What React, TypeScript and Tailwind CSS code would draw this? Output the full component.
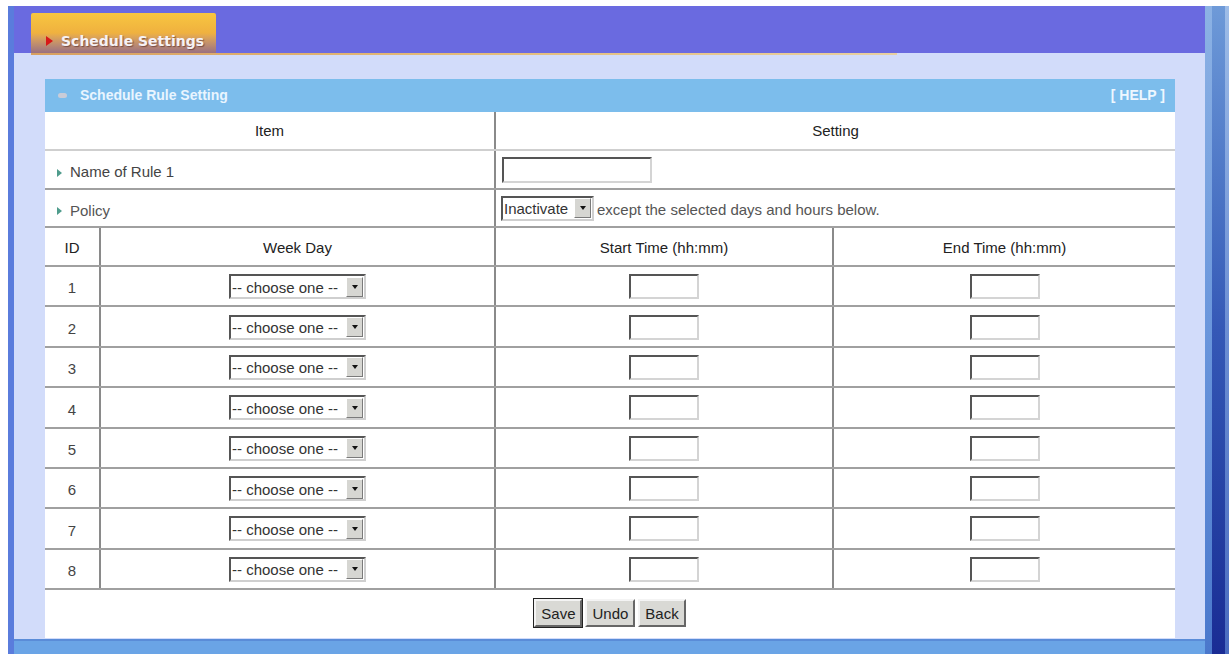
import React from "react";

const Marker = () => (
  <span className="inline-block w-0 h-0 border-y-[4px] border-y-transparent border-l-[5px] border-l-[#4f9c8c] mr-[8px]" />
);

const Arrow = () => (
  <span className="flex items-center justify-center w-[17px] h-[20px] bg-[#d6d6d2] border border-t-white border-l-white border-r-[#7a7a7a] border-b-[#7a7a7a]">
    <span className="w-0 h-0 border-x-[3px] border-x-transparent border-t-[4px] border-t-[#111]" />
  </span>
);

const FakeSelect = ({ label, w }: { label: string; w: string }) => (
  <div
    className={`${w} h-[25px] flex items-center justify-between bg-white border-2 border-t-[#555] border-l-[#555] border-r-[#cfcfcf] border-b-[#cfcfcf] pl-[1px] pr-[1px] text-[15px] text-[#333] leading-none`}
  >
    <span className="pt-[1px]">{label}</span>
    <Arrow />
  </div>
);

const TimeInput = () => (
  <div className="w-[70px] h-[25px] bg-white border-2 border-t-[#555] border-l-[#555] border-r-[#d4d4d4] border-b-[#d4d4d4]" />
);

const Btn = ({ label, def }: { label: string; def?: boolean }) => (
  <button
    className={`h-[28px] px-[5px] bg-[#d9d9d5] text-[15px] text-[#222] leading-none border-2 border-t-[#f4f4f4] border-l-[#f4f4f4] border-r-[#666] border-b-[#666] ${
      def ? "outline outline-1 outline-[#222]" : ""
    }`}
  >
    {label}
  </button>
);

export default function App() {
  const rows = [1, 2, 3, 4, 5, 6, 7, 8];
  return (
    <div className="w-[1229px] h-[654px] bg-white pt-[6px] pl-[8px] flex overflow-hidden font-['Liberation_Sans',Arial,sans-serif]">
      <div className="flex-1 flex flex-col border-l-[6px] border-l-[#5a7cdc]">
        {/* header */}
        <div className="h-[47px] bg-[#6a6ae0] flex items-end pl-[17px]">
          <div className="w-[185px] h-[40px] rounded-t-[2px] bg-gradient-to-b from-[#f8c640] via-[#efb13f] to-[#9a7080] flex items-center pl-[15px] pt-[16px]">
            <span className="w-0 h-0 border-y-[5px] border-y-transparent border-l-[7px] border-l-[#d81818] mr-[8px]" />
            <span className="font-['DejaVu_Sans',Verdana,sans-serif] font-bold text-[14px] text-[#f6f2f4] [text-shadow:1px_1px_1px_rgba(80,40,40,0.6)]">
              Schedule Settings
            </span>
          </div>
        </div>
        {/* body */}
        <div className="flex-1 bg-[#d2dcfa] flex flex-col">
          <div className="ml-[17px] w-[866px] h-[2px] bg-gradient-to-r from-[#d8a060] via-[#e3bb78] to-[#e8d0a0]" />
          <div className="flex-1 pl-[31px] pr-[30px] pt-[24px]">
            <div className="h-[559px] bg-white flex flex-col">
              {/* panel title */}
              <div className="h-[33px] bg-[#7cbdec] flex items-center justify-between pl-[13px] pr-[10px]">
                <div className="flex items-center">
                  <span className="w-[9px] h-[5px] rounded-full bg-[#c9ccd8] mr-[13px]" />
                  <span className="font-bold text-[14px] text-[#e9f5ff]">Schedule Rule Setting</span>
                </div>
                <span className="font-bold text-[14px] text-[#eef7ff]">[ HELP ]</span>
              </div>
              {/* header row */}
              <div className="h-[39px] flex border-b-2 border-b-[#cfcfcf] text-[15px] text-[#222]">
                <div className="w-[451px] flex items-center justify-center pt-[2px] border-r-2 border-r-[#8a8a8a]">Item</div>
                <div className="flex-1 flex items-center justify-center pt-[2px]">Setting</div>
              </div>
              {/* name */}
              <div className="h-[39px] flex border-b-2 border-b-[#a0a0a0] text-[15px]">
                <div className="w-[451px] flex items-center pl-[12px] pt-[6px] text-[#444] border-r-2 border-r-[#8a8a8a]">
                  <Marker />
                  Name of Rule 1
                </div>
                <div className="flex-1 flex items-center pl-[6px]">
                  <div className="w-[150px] h-[26px] bg-white border-2 border-t-[#555] border-l-[#555] border-r-[#d4d4d4] border-b-[#d4d4d4]" />
                </div>
              </div>
              {/* policy */}
              <div className="h-[38px] flex border-b-2 border-b-[#a0a0a0] text-[15px]">
                <div className="w-[451px] flex items-center pl-[12px] pt-[6px] text-[#555] border-r-2 border-r-[#8a8a8a]">
                  <Marker />
                  Policy
                </div>
                <div className="flex-1 flex items-center pl-[5px] text-[#555]">
                  <FakeSelect label="Inactivate" w="w-[93px]" />
                  <span className="ml-[3px] pt-[5px]">except the selected days and hours below.</span>
                </div>
              </div>
              {/* ID header */}
              <div className="h-[39px] flex border-b-2 border-b-[#a0a0a0] text-[15px] text-[#222]">
                <div className="w-[56px] flex items-center justify-center pt-[4px] border-r-2 border-r-[#8a8a8a]">ID</div>
                <div className="w-[395px] flex items-center justify-center pt-[4px] border-r-2 border-r-[#8a8a8a]">Week Day</div>
                <div className="w-[338px] flex items-center justify-center pt-[4px] border-r-2 border-r-[#8a8a8a]">Start Time (hh:mm)</div>
                <div className="flex-1 flex items-center justify-center pt-[4px]">End Time (hh:mm)</div>
              </div>
              {rows.map((n) => (
                <div key={n} className="h-[40.375px] flex border-b-2 border-b-[#a0a0a0] text-[15px] text-[#444]">
                  <div className="w-[56px] flex items-center justify-center pt-[5px] border-r-2 border-r-[#8a8a8a]">{n}</div>
                  <div className="w-[395px] flex items-center justify-center pt-[1px] border-r-2 border-r-[#8a8a8a]">
                    <FakeSelect label="-- choose one --" w="w-[137px]" />
                  </div>
                  <div className="w-[338px] flex items-center justify-center pt-[1px] border-r-2 border-r-[#8a8a8a]">
                    <TimeInput />
                  </div>
                  <div className="flex-1 flex items-center justify-center pt-[1px]">
                    <TimeInput />
                  </div>
                </div>
              ))}
              {/* buttons */}
              <div className="flex-1 flex items-center justify-center gap-[3px] pb-[2px]">
                <Btn label="Save" def />
                <Btn label="Undo" />
                <Btn label="Back" />
              </div>
            </div>
          </div>
        </div>
        <div className="h-[15px] bg-[#6aa4e6] border-t-2 border-t-[#5a8cd8]" />
      </div>
      {/* right bar */}
      <div className="w-[24px] flex">
        <div className="w-[7px] bg-gradient-to-b from-[#8cb2e4] via-[#6a96dc] to-[#4a78cc]" />
        <div className="w-[13px] bg-gradient-to-b from-[#6e9ad8] via-[#3558b6] to-[#1a2c94]" />
        <div className="w-[4px] bg-gradient-to-b from-[#9ebde8] via-[#6c8ed4] to-[#4a6cc0]" />
      </div>
    </div>
  );
}
